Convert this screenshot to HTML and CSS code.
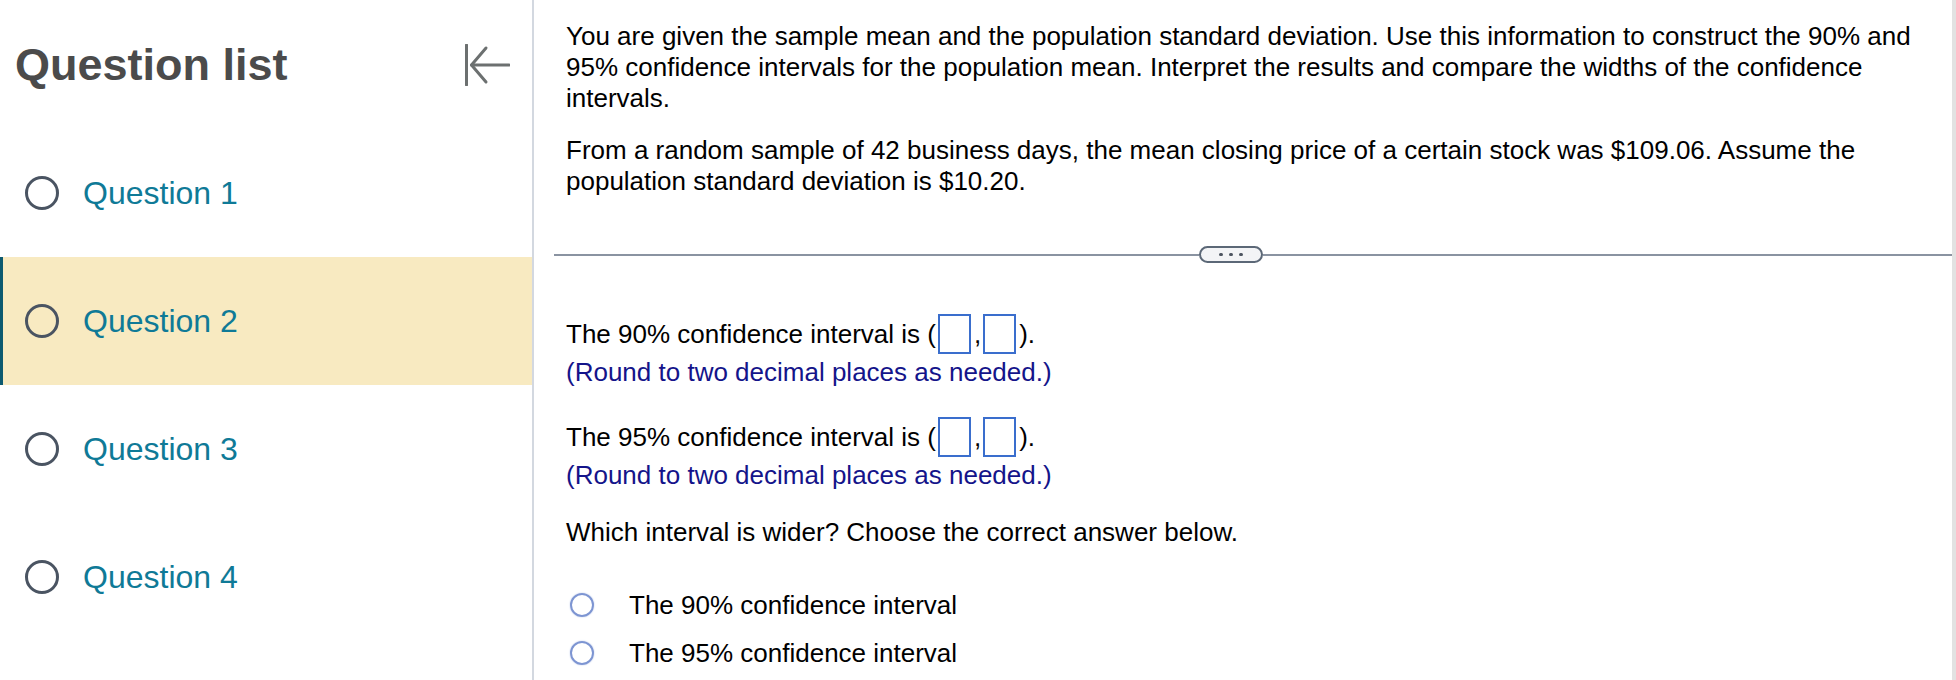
FILE: index.html
```html
<!DOCTYPE html>
<html lang="en">
<head>
<meta charset="utf-8">
<title>Question</title>
<link rel="stylesheet" href="styles.css">
</head>
<body>
<div class="page">
  <aside class="sidebar">
    <div class="side-head">
      <h1 class="side-title">Question list</h1>
      <svg class="collapse" width="46" height="42" viewBox="0 0 46 42" aria-hidden="true">
        <path d="M2.5 1 V41" />
        <path d="M22 4 L7.5 21 L22 38" />
        <path d="M7.5 21 H45" />
      </svg>
    </div>
    <ul class="qlist">
      <li class="qitem"><span class="qcircle"></span><span class="qlabel">Question 1</span></li>
      <li class="qitem active"><span class="qcircle"></span><span class="qlabel">Question 2</span></li>
      <li class="qitem"><span class="qcircle"></span><span class="qlabel">Question 3</span></li>
      <li class="qitem"><span class="qcircle"></span><span class="qlabel">Question 4</span></li>
    </ul>
  </aside>
  <main class="content">
    <p class="para">You are given the sample mean and the population standard deviation. Use this information to construct the 90% and 95% confidence intervals for the population mean. Interpret the results and compare the widths of the confidence intervals.</p>
    <p class="para para-gap">From a random sample of 42 business days, the mean closing price of a certain stock was $109.06. Assume the population standard deviation is $10.20.</p>
    <div class="divider">
      <span class="rule"></span>
      <span class="pill"><i></i><i></i><i></i></span>
      <span class="rule rule-right"></span>
    </div>
    <div class="answer first">The 90% confidence interval is (<span class="box"></span>,<span class="box"></span>).</div>
    <div class="hint">(Round to two decimal places as needed.)</div>
    <div class="answer second">The 95% confidence interval is (<span class="box"></span>,<span class="box"></span>).</div>
    <div class="hint">(Round to two decimal places as needed.)</div>
    <p class="para which">Which interval is wider? Choose the correct answer below.</p>
    <ul class="options">
      <li class="option"><span class="radio"></span><span>The 90% confidence interval</span></li>
      <li class="option"><span class="radio"></span><span>The 95% confidence interval</span></li>
    </ul>
  </main>
  <div class="scrollstrip"></div>
</div>
</body>
</html>
```
FILE: styles.css
```css
html, body {
  margin: 0;
  padding: 0;
  background: #ffffff;
}

body {
  font-family: "Liberation Sans", Arial, Helvetica, sans-serif;
  color: #000;
}

.page {
  display: flex;
  width: 1956px;
  height: 680px;
  overflow: hidden;
}

.sidebar {
  width: 532px;
  flex: 0 0 532px;
  border-right: 2px solid #d3d8e0;
}

.side-head {
  height: 129px;
  display: flex;
  align-items: center;
  justify-content: space-between;
  padding: 0 22px 0 15px;
  box-sizing: border-box;
}

.side-title {
  margin: 0;
  font-size: 45px;
  font-weight: bold;
  color: #4b4b4b;
  letter-spacing: 0;
}

.collapse {
  display: block;
  margin-top: 1px;
}

.collapse path {
  fill: none;
  stroke: #6c7070;
  stroke-width: 3;
  stroke-linecap: round;
  stroke-linejoin: round;
}

.qlist {
  list-style: none;
  margin: 0;
  padding: 0;
}

.qitem {
  height: 128px;
  display: flex;
  align-items: center;
  padding-left: 25px;
  box-sizing: border-box;
  gap: 24px;
}

.qitem.active {
  background: #f8eac1;
  box-shadow: inset 3px 0 0 #0d5a70;
}

.qcircle {
  width: 34px;
  height: 34px;
  box-sizing: border-box;
  border: 3.5px solid #4a5462;
  border-radius: 50%;
  flex: 0 0 auto;
}

.qlabel {
  font-size: 32px;
  color: #0f7a97;
}

.content {
  flex: 1;
  padding: 21px 24px 0 32px;
  font-size: 26px;
  line-height: 31px;
  min-width: 0;
}

.para {
  margin: 0;
}

.para-gap {
  margin-top: 21px;
}

.divider {
  display: flex;
  align-items: center;
  margin: 49px -24px 0 -12px;
  height: 17px;
}

.rule {
  flex: 1 1 0;
  height: 2px;
  background: #8a93a1;
}

.rule-right {
  flex: 1 1 44px;
}

.pill {
  width: 64px;
  height: 17px;
  box-sizing: border-box;
  border: 2px solid #5c6877;
  border-radius: 9px;
  background: #f3f4f6;
  display: flex;
  align-items: center;
  justify-content: center;
  gap: 6.5px;
}

.pill i {
  width: 3.5px;
  height: 3.5px;
  border-radius: 50%;
  background: #4d5560;
}

.answer {
  height: 40px;
  display: flex;
  align-items: center;
}

.answer.first {
  margin-top: 51px;
}

.answer.second {
  margin-top: 29px;
}

.box {
  display: inline-block;
  width: 33px;
  height: 40px;
  box-sizing: border-box;
  border: 2px solid #3a6ecd;
  margin: 0 3px 0 2px;
}

.hint {
  color: #14148a;
  margin-top: 3px;
}

.which {
  margin-top: 26px;
}

.options {
  list-style: none;
  margin: 33px 0 0 0;
  padding: 0 0 0 4px;
}

.option {
  height: 48px;
  display: flex;
  align-items: center;
  gap: 35px;
}

.radio {
  width: 24px;
  height: 24px;
  box-sizing: border-box;
  border: 2.5px solid #7d95d2;
  border-radius: 50%;
  box-shadow: 0 0 1.5px #a9b9e3;
  flex: 0 0 auto;
}

.scrollstrip {
  width: 4px;
  flex: 0 0 4px;
  background: #e2e2e2;
}
```
